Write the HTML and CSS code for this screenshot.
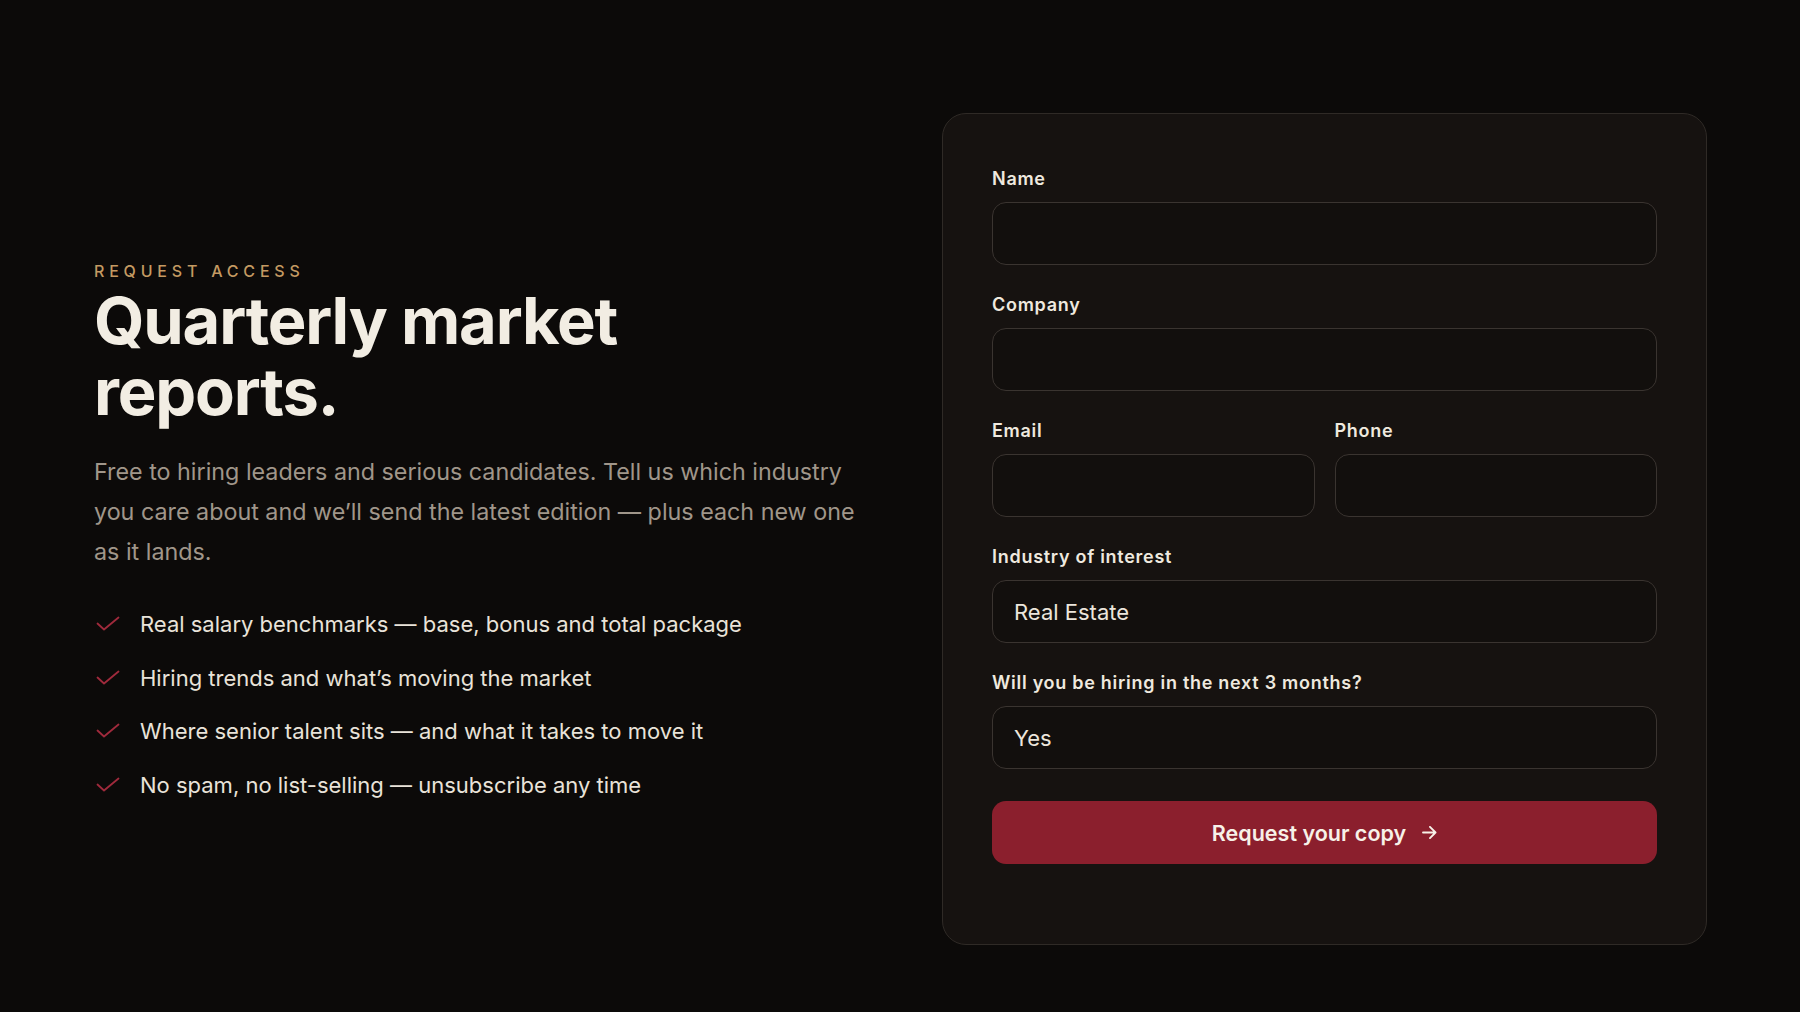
FILE: index.html
```html
<!DOCTYPE html>
<html lang="en">
<head>
<meta charset="utf-8">
<title>Request access — Quarterly market reports</title>
<link rel="stylesheet" href="styles.css">
</head>
<body>
<main class="page">
  <section class="intro">
    <p class="eyebrow">REQUEST ACCESS</p>
    <h1 class="title">Quarterly market<br>reports.</h1>
    <p class="lede">Free to hiring leaders and serious candidates. Tell us which industry you care about and we’ll send the latest edition — plus each new one as it lands.</p>
    <ul class="perks">
      <li class="perk"><svg class="check" viewBox="0 0 24 16" aria-hidden="true"><path d="M1.5 7.5 L8 13.5 L22.5 1.5"/></svg><span>Real salary benchmarks — base, bonus and total package</span></li>
      <li class="perk"><svg class="check" viewBox="0 0 24 16" aria-hidden="true"><path d="M1.5 7.5 L8 13.5 L22.5 1.5"/></svg><span>Hiring trends and what’s moving the market</span></li>
      <li class="perk"><svg class="check" viewBox="0 0 24 16" aria-hidden="true"><path d="M1.5 7.5 L8 13.5 L22.5 1.5"/></svg><span>Where senior talent sits — and what it takes to move it</span></li>
      <li class="perk"><svg class="check" viewBox="0 0 24 16" aria-hidden="true"><path d="M1.5 7.5 L8 13.5 L22.5 1.5"/></svg><span>No spam, no list-selling — unsubscribe any time</span></li>
    </ul>
  </section>

  <form class="card">
    <div class="field">
      <label class="label">Name</label>
      <div class="input"></div>
    </div>
    <div class="field">
      <label class="label">Company</label>
      <div class="input"></div>
    </div>
    <div class="row">
      <div class="field">
        <label class="label">Email</label>
        <div class="input"></div>
      </div>
      <div class="field">
        <label class="label">Phone</label>
        <div class="input"></div>
      </div>
    </div>
    <div class="field">
      <label class="label">Industry of interest</label>
      <div class="input">Real Estate</div>
    </div>
    <div class="field">
      <label class="label">Will you be hiring in the next 3 months?</label>
      <div class="input">Yes</div>
    </div>
    <button type="button" class="submit">Request your copy
      <svg class="arrow" viewBox="0 0 16 14" aria-hidden="true"><path d="M1 7 H14.5 M8.5 1 L14.5 7 L8.5 13"/></svg>
    </button>
  </form>
</main>
</body>
</html>
```

FILE: styles.css
```css
* { box-sizing: border-box; }

html, body {
  margin: 0;
  padding: 0;
  background: #0c0a09;
  font-family: Inter, "Noto Sans", "Liberation Sans", sans-serif;
  -webkit-font-smoothing: antialiased;
}

.page {
  height: 1012px;
  padding: 113px 93px 0 94px;
  display: grid;
  grid-template-columns: 1fr 1fr;
  column-gap: 83px;
  align-items: start;
}

.intro {
  padding-top: 148px;
}

.eyebrow {
  margin: 0;
  font-size: 16px;
  line-height: 20px;
  font-weight: 500;
  letter-spacing: 0.3em;
  color: #c49a62;
}

.title {
  margin: 4px 0 0;
  font-size: 65px;
  line-height: 71px;
  font-weight: 700;
  letter-spacing: -0.018em;
  color: #f2ede3;
}

.lede {
  margin: 25px 0 0;
  font-size: 23.3px;
  line-height: 40px;
  color: #a0968a;
}

.perks {
  list-style: none;
  margin: 37px 0 0;
  padding: 0;
  display: flex;
  flex-direction: column;
  gap: 23.5px;
}

.perk {
  display: flex;
  align-items: center;
  gap: 20px;
  font-size: 22px;
  line-height: 30px;
  color: #e9e3d9;
}

.check {
  width: 24px;
  height: 16px;
  margin-left: 2px;
  flex: none;
  fill: none;
  stroke: #a02a3c;
  stroke-width: 1.8;
  stroke-linecap: round;
  stroke-linejoin: round;
}

.card {
  height: 832px;
  background: #161210;
  border: 1px solid #2f2a26;
  border-radius: 24px;
  padding: 53px 49px 0;
  display: flex;
  flex-direction: column;
  gap: 28px;
}

.row {
  display: grid;
  grid-template-columns: 1fr 1fr;
  gap: 20px;
}

.field {
  display: flex;
  flex-direction: column;
  gap: 11px;
}

.label {
  font-size: 18px;
  line-height: 24px;
  font-weight: 600;
  letter-spacing: 0.04em;
  color: #efe9df;
}

.input {
  height: 63px;
  border: 1px solid #3a3430;
  border-radius: 14px;
  background: #120f0d;
  padding: 0 21px;
  display: flex;
  align-items: center;
  font-size: 22px;
  color: #ece6dc;
}

.submit {
  margin-top: 4px;
  height: 63px;
  border: none;
  border-radius: 14px;
  background: #8b1f2d;
  color: #f7f1e8;
  font-family: inherit;
  font-size: 21.5px;
  font-weight: 600;
  display: flex;
  align-items: center;
  justify-content: center;
  gap: 16px;
  cursor: pointer;
}

.arrow {
  width: 15px;
  height: 13px;
  fill: none;
  stroke: #f7f1e8;
  stroke-width: 2;
  stroke-linecap: round;
  stroke-linejoin: round;
}
```
